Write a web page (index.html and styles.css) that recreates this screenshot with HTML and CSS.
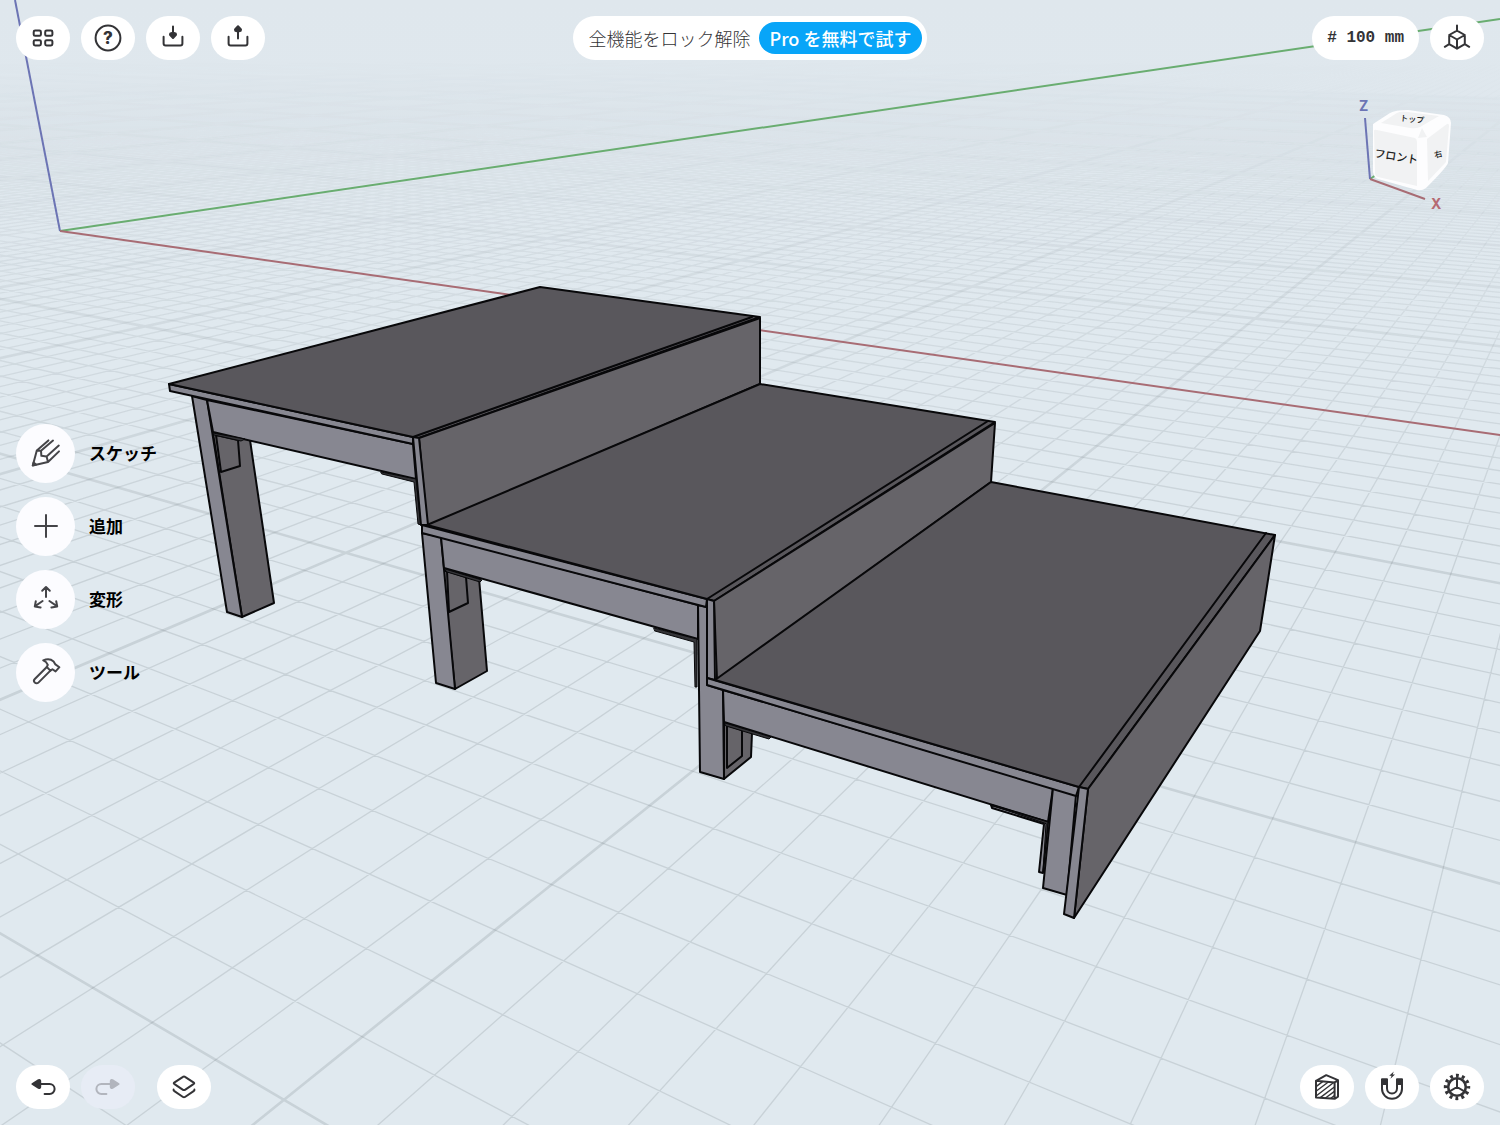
FILE: index.html
```html
<!DOCTYPE html>
<html lang="ja">
<head>
    <meta charset="UTF-8">
    <meta name="viewport" content="width=device-width, initial-scale=1.0">
    <title>ステージ</title>
    <link rel="stylesheet" href="styles.css">
</head>
<body>
    <div class="app">
        <!-- 3D viewport -->
        <svg class="viewport" viewBox="0 0 1500 1125" preserveAspectRatio="xMidYMid slice" aria-hidden="true">
            <defs>
                <linearGradient id="fade" gradientUnits="userSpaceOnUse" x1="0" y1="60" x2="0" y2="560">
                    <stop offset="0" stop-color="#000"/>
                    <stop offset="0.16" stop-color="#2c2c2c"/>
                    <stop offset="0.4" stop-color="#7c7c7c"/>
                    <stop offset="1" stop-color="#fff"/>
                </linearGradient>
                <mask id="fade-mask" maskUnits="userSpaceOnUse" x="0" y="0" width="1500" height="1125">
                    <rect width="1500" height="1125" fill="url(#fade)"/>
                </mask>
            </defs>

            <g class="grid" mask="url(#fade-mask)">
                <path class="grid-minor" id="grid-minor"/>
                <path class="grid-major" id="grid-major"/>
            </g>

            <!-- World axes -->
            <path class="axis axis-z" d="M60 231L15 0"/>
            <path class="axis axis-y" d="M60 231L1500 19"/>
            <path class="axis axis-x" d="M60 231L1500 435"/>

            <!-- Upper step -->
            <g class="model">
                <path class="side" d="M207 400L250 440L274 603L242 617L214 440Z"/>
                <path class="side" d="M216 435L238 440L240 466L221 472Z"/>
                <path class="front" d="M192 396L207 400L242 617L227 612Z"/>
                <path class="front" d="M207 400L413 444L416 479L213 432Z"/>
                <path class="dark" d="M213 433L245 439L241 441L214 435Z"/>
                <path class="dark" d="M381 472L416 479L421 525L418 524L414 482L382 474Z"/>
                <path class="front" d="M169 384L413 437L413 444L170 391Z"/>
                <path class="top" d="M169 384L540 287L760 317L419 438L413 437Z"/>
                <path class="line" d="M413 437L752 317"/>
                <path class="side" d="M419 438L760 318V384L430 525H427Z"/>
                <path class="front" d="M413 437L419 438L428 525L421 525Z"/>
            </g>

            <!-- Middle step -->
            <g class="model">
                <path class="side" d="M441 570L479 578L487 671L455 689L446 600Z"/>
                <path class="side" d="M447 571L466 577L468 603L449 612Z"/>
                <path class="front" d="M422 533L441 537L455 689L436 683Z"/>
                <path class="front" d="M441 537L698 605V639L444 568Z"/>
                <path class="dark" d="M445 569L482 580L480 582L447 572Z"/>
                <path class="dark" d="M654 628L697 639V687H695L694 642L655 631Z"/>
            </g>

            <!-- Lower step -->
            <g class="model">
                <path class="side" d="M724 691L752 733L751 757L724 779Z"/>
                <path class="side" d="M727 725L742 730V756L727 768Z"/>
                <path class="front" d="M698 605L707 607V685L723 690L724 779L700 772Z"/>
                <path class="front" d="M422 525L707 599L706 607L422 533Z"/>
                <path class="top" d="M427 525L760 384L995 422L714 601L707 599Z"/>
                <path class="line" d="M707 599L988 421"/>
                <path class="side" d="M714 601L995 423L991 482L717 680Z"/>
                <path class="front" d="M707 599L714 601L715 680L707 678Z"/>
                <path class="front" d="M723 690L1053 788L1048 822L724 722Z"/>
                <path class="dark" d="M725 723L771 737L769 739L726 726Z"/>
                <path class="front" d="M991 805L1048 822L1043 873L1039 872L1044 824L992 808Z"/>
                <path class="dark" d="M991 805L1048 822L1043 873L1046 824Z"/>
                <path class="front" d="M1053 788L1076 795L1067 895L1043 888Z"/>
                <path class="front" d="M707 678L1079 787L1076 796L707 685Z"/>
                <path class="top" d="M715 680L991 482L1275 535L1088 789L1079 787Z"/>
                <path class="line" d="M1079 787L1266 533"/>
                <path class="side" d="M1088 789L1275 535L1260 631L1074 918Z"/>
                <path class="front" d="M1079 787L1088 789L1074 918L1064 914Z"/>
            </g>

            <!-- View cube -->
            <g class="cube">
                <path class="axis axis-y" d="M1370 179L1376 175"/>
                <path class="cube-body" d="M1373 124L1390 113Q1395 110 1408 110L1444 115Q1451 117 1451 123L1448 163Q1447 167 1426 188Q1422 191 1417 190L1378 179Q1374 178 1373 172Z"/>
                <path class="cube-top" d="M1381 123L1397 113Q1400 111 1408 112L1439 116L1420 127Q1416 129 1410 128Z"/>
                <path class="cube-front" d="M1374 131Q1374 129 1377 130L1415 138Q1417 139 1417 142V186L1378 177Q1375 176 1375 173Z"/>
                <path class="cube-right" d="M1427 139L1447 124Q1449 123 1449 126L1446 162L1428 181Z"/>
                <path class="cube-corner" d="M1422 128L1427 137L1418 138Z"/>
                <text class="cube-label" x="1374" y="157" transform="rotate(9 1374 157)">フロント</text>
                <text class="cube-label small" x="1400" y="121" transform="rotate(5 1400 121)">トップ</text>
                <text class="cube-label small" x="1435" y="158" transform="rotate(-14 1435 158)">右</text>
                <path class="axis axis-z" d="M1370 179L1365 118"/>
                <path class="axis axis-x" d="M1370 179L1425 199"/>
                <text class="axis-label label-z" x="1359" y="111">Z</text>
                <text class="axis-label label-x" x="1431" y="209">X</text>
            </g>
        </svg>

        <header class="bar">
            <div class="group">
                <button class="pill" type="button" aria-label="デザイン一覧">
                    <svg class="icon" viewBox="0 0 28 28">
                        <rect x="4.7" y="6.6" width="7.2" height="5.2" rx="1.4"/>
                        <rect x="16.2" y="6.6" width="7.2" height="5.2" rx="1.4"/>
                        <rect x="4.7" y="16.2" width="7.2" height="5.2" rx="1.4"/>
                        <rect x="16.2" y="16.2" width="7.2" height="5.2" rx="1.4"/>
                    </svg>
                </button>
                <button class="pill" type="button" aria-label="ヘルプ">
                    <svg class="icon" viewBox="0 0 28 28">
                        <circle cx="14" cy="14" r="12.4"/>
                        <text class="help-mark" x="14" y="20">?</text>
                    </svg>
                </button>
                <button class="pill" type="button" aria-label="読み込み">
                    <svg class="icon" viewBox="0 0 28 28">
                        <path d="M4.6 12.8V19.5a2 2 0 0 0 2 2h14.8a2 2 0 0 0 2-2V12.8M14 2.4V10"/>
                        <path class="solid" d="M11.3 9.4L14 8.8L16.7 9.4L17 10.8L14 14L11 10.8Z"/>
                    </svg>
                </button>
                <button class="pill" type="button" aria-label="書き出し">
                    <svg class="icon" viewBox="0 0 28 28">
                        <path d="M4.6 12.8V19.5a2 2 0 0 0 2 2h14.8a2 2 0 0 0 2-2V12.8M14 14.6V6"/>
                        <path class="solid" d="M11.3 6.8L14 7.4L16.7 6.8L17 5.4L14 2.2L11 5.4Z"/>
                    </svg>
                </button>
            </div>

            <div class="promo">
                <span class="promo-text">全機能をロック解除</span>
                <button class="promo-button" type="button">Pro を無料で試す</button>
            </div>

            <div class="group end">
                <button class="pill unit" type="button"># 100 mm</button>
                <button class="pill" type="button" aria-label="ビュー">
                    <svg class="icon" viewBox="0 0 28 28">
                        <path d="M14 1.4V6.6L21.8 11V20.2L14 24.7L6.2 20.2V11L14 6.6M6.2 11L14 15.5L21.8 11M14 15.5V24.7M6.2 20.2L1.8 22.8M21.8 20.2L26.2 22.8"/>
                    </svg>
                </button>
            </div>
        </header>

        <nav class="tools">
            <button class="tool" type="button">
                <span class="tool-icon">
                    <svg class="icon large" viewBox="0 0 32 32">
                        <path d="M18.4 3.4L6.8 13.4L2.8 28.4L18 25L29 14.4M23 3.6L11 13.8L6.8 13.4M11 13.8L11.4 18.8L16.6 19.4L28.8 8.6M16.6 19.4L18 25"/>
                        <path class="solid" d="M2.8 28.4L3.6 25.6L6 27.6Z"/>
                    </svg>
                </span>
                スケッチ
            </button>
            <button class="tool" type="button">
                <span class="tool-icon">
                    <svg class="icon large" viewBox="0 0 32 32">
                        <path d="M16 5V27M5 16H27"/>
                    </svg>
                </span>
                追加
            </button>
            <button class="tool" type="button">
                <span class="tool-icon">
                    <svg class="icon large" viewBox="0 0 32 32">
                        <path d="M16 14V4M12.2 7.8L16 4L19.8 7.8M12.6 18L4.8 23.4M5.8 18.2L4.8 23.4L10.6 24.4M19.4 18L27.2 23.4M26.2 18.2L27.2 23.4L21.4 24.4"/>
                    </svg>
                </span>
                変形
            </button>
            <button class="tool" type="button">
                <span class="tool-icon">
                    <svg class="icon large" viewBox="0 0 32 32">
                        <path d="M13.2 4.4C17 2.8 21 3.2 23.6 5.4L25.4 8.4L29.4 11.2L25.6 15.4L22.4 13.2L20.4 14.6L16.8 11L17.8 8.8C17 6.6 15.4 5.2 13.2 4.4Z"/>
                        <path d="M16.8 11L4.8 23a2.4 2.4 0 0 0 3.6 3.6L20.4 14.6"/>
                    </svg>
                </span>
                ツール
            </button>
        </nav>

        <footer class="bar bottom">
            <div class="group">
                <button class="pill" type="button" aria-label="元に戻す">
                    <svg class="icon" viewBox="0 0 28 28">
                        <path d="M10 11H20.6a5 5 0 0 1 0 10H15.6"/>
                        <path class="solid" d="M3.4 11L9.6 7.2Q11.2 6.6 11.2 8V14Q11.2 15.4 9.6 14.8Z"/>
                    </svg>
                </button>
                <button class="pill" type="button" aria-label="やり直す" disabled>
                    <svg class="icon" viewBox="0 0 28 28">
                        <path d="M18 11H7.4a5 5 0 0 0 0 10H12.4"/>
                        <path class="solid" d="M24.6 11L18.4 7.2Q16.8 6.6 16.8 8V14Q16.8 15.4 18.4 14.8Z"/>
                    </svg>
                </button>
                <button class="pill layers" type="button" aria-label="アイテム">
                    <svg class="icon" viewBox="0 0 28 28">
                        <path d="M14 3.4Q14.6 3.4 15 3.8L23.8 9.6Q24.6 10.2 23.8 10.8L15 16.8Q14 17.4 13 16.8L4.2 10.8Q3.4 10.2 4.2 9.6L13 3.8Q13.4 3.4 14 3.4Z"/>
                        <path d="M3.6 16.6Q3.4 17.6 4.4 18.2L13 24Q14 24.6 15 24L23.6 18.2Q24.6 17.6 24.4 16.6"/>
                    </svg>
                </button>
            </div>
            <div class="group end">
                <button class="pill" type="button" aria-label="断面表示">
                    <svg class="icon" viewBox="0 0 28 28">
                        <path d="M3 7.8L13.2 2.2L25 7.2V23.6L21.6 25.8L3 24.4ZM3 7.8L21.6 9.4L25 7.2M21.6 9.4V25.8"/>
                        <path class="hatch" d="M3.4 13.4L9.6 8.6M3.4 18L15 9.2M3.4 22.8L20.4 9.8M7.6 24.4L21.4 14M12.8 24.8L21.4 18.4M17.8 25.2L21.4 22.6"/>
                    </svg>
                </button>
                <button class="pill" type="button" aria-label="スナップ">
                    <svg class="icon" viewBox="0 0 28 28">
                        <path d="M4 6.4H9V15.6a5 5 0 0 0 10 0V6.4H24V15.8a10 10 0 0 1-20 0Z"/>
                        <path class="solid" d="M4 6.4H9V11H4ZM19 6.4H24V11H19Z"/>
                        <path class="bolt" d="M15.8-1.6L11.2 2.8H13.6L12.4 5.8L17 1.4H14.6Z"/>
                    </svg>
                </button>
                <button class="pill" type="button" aria-label="設定">
                    <svg class="icon" viewBox="0 0 28 28">
                        <circle class="ring" cx="14" cy="14" r="8.8"/>
                        <circle class="teeth" cx="14" cy="14" r="11.5"/>
                        <path d="M14 14V5.4M14 14L6.6 18.4M14 14L21.4 18.4"/>
                    </svg>
                </button>
            </div>
        </footer>
    </div>

    <script src="script.js"></script>
</body>
</html>
```

FILE: styles.css
```css
* {
    box-sizing: border-box;
}

body {
    margin: 0;
    font-family: "Noto Sans CJK JP", sans-serif;
    background-color: #e0e8ee;
    color: #333336;
}

button {
    margin: 0;
    padding: 0;
    border: none;
    font-family: inherit;
    color: inherit;
    cursor: pointer;
}

.app {
    position: relative;
    display: grid;
    grid-template-rows: auto 1fr auto;
    min-height: 100vh;
    padding: 16px;
    overflow: hidden;
}

/* Viewport lies under all the controls */
.viewport {
    position: absolute;
    inset: 0;
    width: 100%;
    height: 100%;
    background: linear-gradient(#dfe7ed, #e0e9ef 30%);
}

.grid-minor,
.grid-major {
    fill: none;
    stroke: #606870;
    stroke-opacity: 0.18;
    stroke-width: 1.3;
}

.grid-major {
    stroke-width: 2.6;
}

.axis {
    fill: none;
    stroke-width: 2;
}

.axis-x {
    stroke: #a86c74;
}

.axis-y {
    stroke: #69ad70;
}

.axis-z {
    stroke: #6c74b4;
}

.model path {
    stroke: #08080a;
    stroke-width: 2;
    stroke-linejoin: round;
    stroke-linecap: round;
}

.model .top {
    fill: #59575c;
}

.model .side {
    fill: #666469;
}

.model .front {
    fill: #878791;
}

.model .dark {
    fill: #343438;
    stroke-width: 1;
}

.model .line {
    fill: none;
}

.cube-body {
    fill: #fdfdfe;
}

.cube-top,
.cube-front,
.cube-right,
.cube-corner {
    fill: #f1f2f3;
}

.cube-label {
    font-size: 11px;
    font-weight: 500;
    fill: #222;
}

.cube-label.small {
    font-size: 8px;
}

.axis-label {
    font-family: Inter, sans-serif;
    font-size: 14px;
    font-weight: 700;
}

.label-x {
    fill: #b56a72;
}

.label-z {
    fill: #6c74b4;
}

.bar {
    position: relative;
    display: grid;
    grid-template-columns: 1fr auto 1fr;
    align-items: center;
}

.bar.bottom {
    grid-template-columns: 1fr auto;
}

.group {
    display: flex;
    gap: 11px;
}

.group.end {
    justify-content: flex-end;
}

.pill {
    display: flex;
    align-items: center;
    justify-content: center;
    width: 54px;
    height: 44px;
    border-radius: 22px;
    background-color: #fff;
}

.pill:disabled {
    background-color: #e7ecf5;
    color: #b2b5bd;
    cursor: default;
}

.pill.layers {
    margin-left: 11px;
}

.pill.unit {
    width: auto;
    padding: 0 15px;
    font-family: "Liberation Mono", monospace;
    font-size: 16px;
    font-weight: 700;
}

.promo {
    display: flex;
    align-items: center;
    gap: 8px;
    height: 44px;
    padding: 0 5px 0 16px;
    border-radius: 22px;
    background-color: #fff;
}

.promo-text {
    font-size: 18px;
    font-weight: 300;
    line-height: 24px;
}

.promo-button {
    height: 32px;
    padding: 0 11px;
    border-radius: 16px;
    background-color: #08a5f8;
    color: #fff;
    font-size: 18px;
    font-weight: 500;
    line-height: 24px;
}

.tools {
    position: relative;
    display: flex;
    flex-direction: column;
    align-items: flex-start;
    justify-content: center;
    gap: 14px;
}

.tool {
    display: flex;
    align-items: center;
    gap: 14px;
    background: none;
    color: #000;
    font-size: 17px;
    font-weight: 700;
    line-height: 24px;
}

.tool-icon {
    display: flex;
    align-items: center;
    justify-content: center;
    width: 59px;
    height: 59px;
    border-radius: 50%;
    background-color: #fcfcff;
    color: #444448;
}

.icon {
    width: 28px;
    height: 28px;
    overflow: visible;
    fill: none;
    stroke: currentColor;
    stroke-width: 2;
    stroke-linecap: round;
    stroke-linejoin: round;
}

.icon.large {
    width: 32px;
    height: 32px;
}

.icon .solid {
    fill: currentColor;
}

.icon .hatch {
    stroke-width: 1.4;
}

.icon .bolt {
    fill: currentColor;
    stroke: none;
}

.icon .ring {
    stroke-width: 2.6;
}

.icon .teeth {
    stroke-width: 3.4;
    stroke-linecap: butt;
    stroke-dasharray: 2.9 3.12;
    stroke-dashoffset: 1.4;
}

.help-mark {
    font-family: Inter, sans-serif;
    font-size: 17px;
    font-weight: 800;
    text-anchor: middle;
    fill: currentColor;
    stroke: none;
}
```

FILE: script.js
```javascript
// Ground grid in two-point perspective: every line runs to one of two
// vanishing points on the horizon.
const HORIZON = -4;
const VANISH_X = -1597;
const VANISH_Y = 1656;
const BOTTOM = 1200;
const RIGHT = 1560;

const minor = [];
const major = [];

// Lines parallel to the X axis
for (let n = -130; n <= 38; n++) {
    if (n === 0) continue;
    const run = 7.059 - 0.1785 * n;
    const y = HORIZON + (RIGHT - VANISH_X) / run;
    const line = `M${VANISH_X} ${HORIZON}L${RIGHT} ${y.toFixed(2)}`;
    (n % 10 === 0 ? major : minor).push(line);
}

// Lines parallel to the Y axis
for (let n = -90; n <= 68; n++) {
    if (n === 0) continue;
    const run = 6.793 - 0.111 * n;
    const x = VANISH_Y - run * (BOTTOM - HORIZON);
    const line = `M${VANISH_Y} ${HORIZON}L${x.toFixed(2)} ${BOTTOM}`;
    (n % 10 === 0 ? major : minor).push(line);
}

document.getElementById('grid-minor').setAttribute('d', minor.join(''));
document.getElementById('grid-major').setAttribute('d', major.join(''));
```
